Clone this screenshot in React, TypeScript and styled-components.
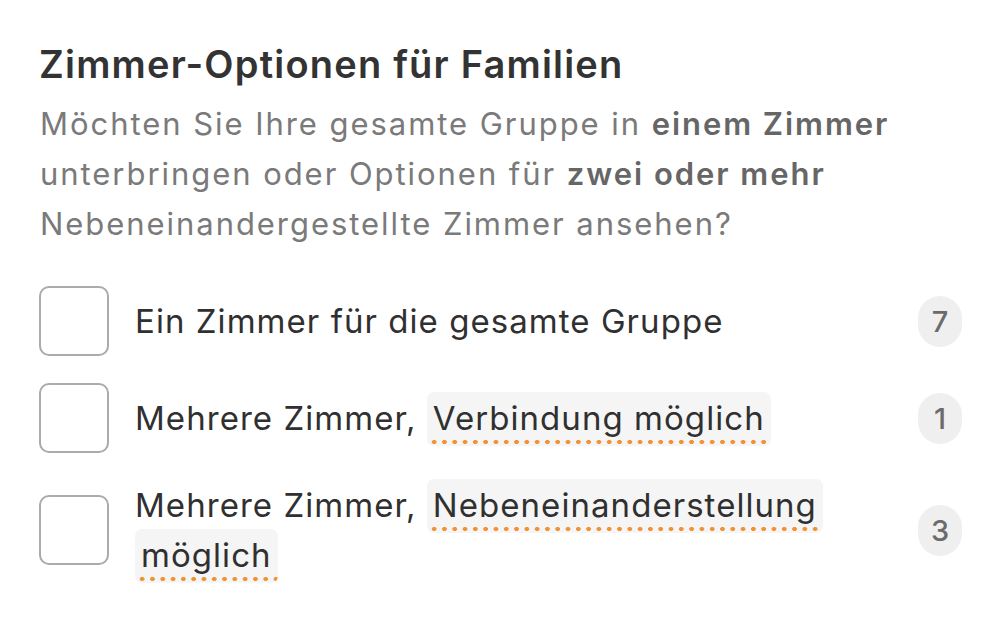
import React from "react";
import styled, { createGlobalStyle } from "styled-components";

const GlobalStyle = createGlobalStyle`
  html, body { margin: 0; padding: 0; background: #ffffff; }
  body { font-family: Inter, "Noto Sans", "Liberation Sans", sans-serif; -webkit-font-smoothing: antialiased; }
`;

const Panel = styled.section`
  width: 1000px;
  height: 619px;
  box-sizing: border-box;
  padding: 41px 38px 0 39px;
  background: #ffffff;
`;

const Title = styled.h2`
  margin: 0;
  font-size: 38px;
  line-height: 46px;
  font-weight: 600;
  color: #333333;
  letter-spacing: 1.2px;
`;

const Description = styled.p`
  margin: 12px 0 0 1px;
  font-size: 31px;
  line-height: 50px;
  font-weight: 400;
  color: #7a7a7a;
  letter-spacing: 1.95px;
  width: 910px;
`;

const Strong = styled.strong`
  font-weight: 600;
  color: #666666;
`;

const OptionList = styled.ul`
  list-style: none;
  margin: 37px 0 0 0;
  padding: 0;
  display: flex;
  flex-direction: column;
  gap: 27px;
`;

const OptionRow = styled.li`
  display: flex;
  align-items: center;
  gap: 26px;
`;

const Checkbox = styled.span`
  flex: none;
  width: 70px;
  height: 70px;
  box-sizing: border-box;
  border: 2px solid #ababab;
  border-radius: 10px;
  background: #ffffff;
`;

const Label = styled.span`
  flex: 1;
  font-size: 33px;
  line-height: 50px;
  color: #303030;
  letter-spacing: 1.05px;
  padding-right: 60px;
`;

const Term = styled.span`
  background-color: #f5f5f5;
  background-image: radial-gradient(circle, #f39233 2px, transparent 2.5px);
  background-size: 10.3px 6px;
  background-repeat: repeat-x;
  background-position: 2px calc(100% - 1px);
  border-radius: 7px;
  padding: 6px 6px 8px;
  -webkit-box-decoration-break: clone;
  box-decoration-break: clone;
`;

const Count = styled.span`
  flex: none;
  min-width: 44px;
  height: 51px;
  box-sizing: border-box;
  padding: 0 12px;
  border-radius: 999px;
  background: #efefef;
  color: #6b6b6b;
  font-size: 29px;
  font-weight: 500;
  display: flex;
  align-items: center;
  justify-content: center;
`;

type Option = { parts: React.ReactNode; count: number };

const options: Option[] = [
  { parts: <>Ein Zimmer für die gesamte Gruppe</>, count: 7 },
  {
    parts: (
      <>
        Mehrere Zimmer, <Term>Verbindung möglich</Term>
      </>
    ),
    count: 1,
  },
  {
    parts: (
      <>
        Mehrere Zimmer, <Term>Nebeneinanderstellung möglich</Term>
      </>
    ),
    count: 3,
  },
];

export default function App() {
  return (
    <>
      <GlobalStyle />
      <Panel>
        <Title>Zimmer-Optionen für Familien</Title>
        <Description>
          Möchten Sie Ihre gesamte Gruppe in <Strong>einem Zimmer</Strong> unterbringen oder Optionen für{" "}
          <Strong>zwei oder mehr</Strong> Nebeneinandergestellte Zimmer ansehen?
        </Description>
        <OptionList>
          {options.map((o, i) => (
            <OptionRow key={i}>
              <Checkbox role="checkbox" aria-checked="false" />
              <Label>{o.parts}</Label>
              <Count>{o.count}</Count>
            </OptionRow>
          ))}
        </OptionList>
      </Panel>
    </>
  );
}
